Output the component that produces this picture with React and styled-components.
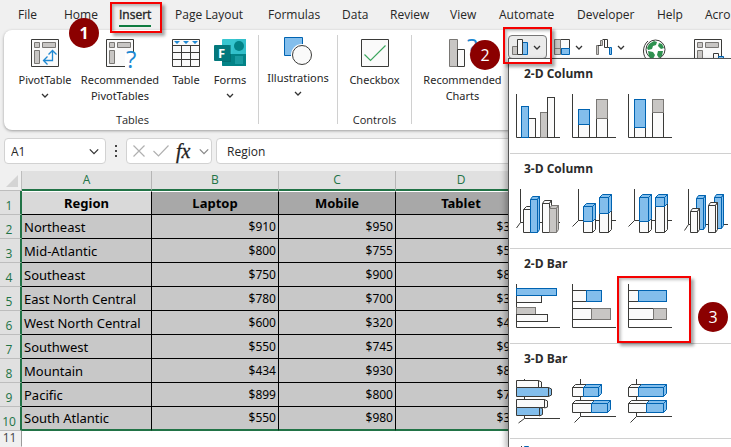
import React, { useState } from "react";
import styled, { createGlobalStyle, css } from "styled-components";

const BLUE = "#83beec";
const BLUE_LINE = "#0063b1";
const GRAY = "#c8c6c4";
const GRAY_LINE = "#797774";
const WHITE = "#fafafa";
const LINE = "#3a3a38";

const GlobalStyle = createGlobalStyle`
  * {
    box-sizing: border-box;
  }
  body {
    margin: 0;
    font-family: "Open Sans", "Noto Sans", sans-serif;
    font-size: 12px;
    color: #262626;
    background: #f0f0f0;
  }
  button, input {
    font: inherit;
    color: inherit;
  }
`;

const Window = styled.div`
  position: relative;
  display: flex;
  flex-direction: column;
  height: 100vh;
  overflow: hidden;
  background: #f0f0f0;
`;

const plainButton = css`
  padding: 0;
  border: 0;
  background: none;
  cursor: pointer;
`;

/* ---------- callouts ---------- */

const Highlight = styled.span`
  position: absolute;
  inset: ${(p) => p.$inset};
  border: 2px solid #f50000;
  box-shadow: 3px 3px 3px rgba(0, 0, 0, 0.35), inset 2px 2px 3px rgba(0, 0, 0, 0.25);
  pointer-events: none;
  z-index: 10;
`;

const Badge = styled.span`
  position: absolute;
  left: ${(p) => p.$left}px;
  top: ${(p) => p.$top}px;
  display: flex;
  align-items: center;
  justify-content: center;
  width: 30px;
  height: 30px;
  border-radius: 50%;
  background: #8b0000;
  color: #fff;
  font-size: 16px;
  font-weight: ${(p) => (p.$bold ? 700 : 400)};
  pointer-events: none;
  z-index: 10;
`;

/* ---------- tabs ---------- */

const TabBar = styled.nav`
  display: grid;
  grid-template-columns: 46px 55px 56px 93px 74px 48px 60px 49px 78px 80px 48px 60px;
  flex: none;
  height: 30px;
  padding-left: 18px;
`;

const TabItem = styled.div`
  position: relative;
  justify-self: start;
`;

const Tab = styled.button`
  ${plainButton}
  height: 27px;
  padding-top: 5px;
  line-height: 18px;
  white-space: nowrap;
  border-bottom: 2px solid ${(p) => (p.$active ? "#107c41" : "transparent")};
  -webkit-text-stroke: ${(p) => (p.$active ? "0.4px" : "0")};
`;

/* ---------- ribbon ---------- */

const Ribbon = styled.div`
  display: flex;
  flex: none;
  height: 100px;
  margin-left: 4px;
  padding: 5px 0 6px;
  border-radius: 8px 0 0 8px;
  background: #fff;
  box-shadow: 0 1px 3px rgba(0, 0, 0, 0.35);
`;

const Group = styled.section`
  display: flex;
  flex: none;
  flex-direction: column;
  align-items: center;
  justify-content: space-between;
  min-width: ${(p) => p.$min}px;
  padding-left: ${(p) => p.$pad || 0}px;
  border-right: 1px solid #d0d0d0;
`;

const Tools = styled.div`
  display: grid;
  grid-template-columns: 60px 84px 42px 40px;
  gap: 3px;
`;

const Tool = styled.button`
  ${plainButton}
  display: flex;
  flex-direction: column;
  align-items: center;
  width: 100%;
  padding-top: ${(p) => (p.$raised ? 2 : 4)}px;
  font-family: "Noto Sans", sans-serif;
  font-size: 11px;
  line-height: 16px;
  white-space: nowrap;

  svg {
    display: block;
    margin-bottom: 5px;
  }
  svg.chevron {
    margin: 5px 0 0;
  }
`;

const GroupName = styled.div`
  margin-bottom: -4px;
  line-height: 16px;
  font-size: 11px;
`;

const ChartGroup = styled.section`
  display: flex;
  flex: 1;
  align-items: flex-start;
  gap: 3px;
  min-width: 0;
  padding-left: 8px;
`;

const Recommend = styled.div`
  position: relative;
  flex: none;
  width: 85px;
`;

const Picker = styled.div`
  position: relative;
  flex: none;
`;

const PickerButton = styled.button`
  ${plainButton}
  display: flex;
  align-items: center;
  gap: 4px;
  height: 24px;
  padding: 0 5px 0 3px;
  border: 1px solid ${(p) => (p.$open ? "#767676" : "transparent")};
  border-radius: 4px;
  background: ${(p) => (p.$open ? "#ebebeb" : "none")};
`;

const BigIcon = styled.button`
  ${plainButton}
  flex: none;
  margin: 4px 0 0 ${(p) => p.$gap}px;
`;

/* ---------- formula bar ---------- */

const FormulaBar = styled.div`
  display: flex;
  flex: none;
  align-items: center;
  height: 41px;
  padding: 1px 0 0 4px;
`;

const Field = styled.div`
  display: flex;
  align-items: center;
  height: 26px;
  border: 1px solid #d2d2d2;
  border-radius: 4px;
  background: #fff;
`;

const NameField = styled(Field)`
  width: 102px;
  padding: 0 5px 0 6px;
`;

const Actions = styled(Field)`
  justify-content: space-between;
  width: 86px;
  padding: 0 1px 0 6px;
`;

const FormulaField = styled(Field)`
  flex: 1;
  margin-left: 4px;
  padding-left: 10px;
  border-radius: 4px 0 0 4px;
`;

const TextInput = styled.input`
  flex: 1;
  min-width: 0;
  width: 100%;
  padding: 0;
  border: 0;
  outline: 0;
  background: none;
`;

const IconButton = styled.button`
  ${plainButton}
  display: flex;
  align-items: center;
`;

const Fx = styled(IconButton)`
  font: italic 400 20px/20px "Liberation Serif", serif;
  color: #222;
  -webkit-text-stroke: 0.3px;
`;

const Dots = styled.span`
  display: flex;
  flex-direction: column;
  align-items: center;
  gap: 3px;
  width: 20px;

  i {
    width: 2px;
    height: 2px;
    background: #444;
  }
`;

/* ---------- sheet ---------- */

const SheetArea = styled.div`
  flex: 1;
  min-height: 0;
  overflow: hidden;
  background: #fff;
`;

const Sheet = styled.table`
  width: 100%;
  table-layout: fixed;
  border-spacing: 0;
  color: #000;

  th, td {
    padding: 0;
    overflow: hidden;
    white-space: nowrap;
    line-height: 16px;
  }
`;

const Corner = styled.th`
  width: 22px;
  background: #f0f0f0;
  border-right: 1px solid #bdbdbd;
  border-bottom: 1px solid #bdbdbd;

  svg {
    display: block;
    margin-left: 6px;
  }
`;

const ColHead = styled.th`
  width: ${(p) => p.$width};
  height: 20px;
  background: #e0e0e0;
  border-right: 1px solid #b5b5b5;
  border-bottom: 2px solid #217346;
  color: #217346;
  font-weight: 400;
`;

const RowHead = styled.th`
  height: ${(p) => (p.$selected ? 24 : 16)}px;
  vertical-align: ${(p) => (p.$selected ? "bottom" : "top")};
  background: ${(p) => (p.$selected ? "#e0e0e0" : "#f0f0f0")};
  border-right: ${(p) => (p.$selected ? "2px solid #217346" : "1px solid #9b9b9b")};
  border-bottom: 1px solid ${(p) => (p.$selected ? "#bdbdbd" : "#f0f0f0")};
  color: ${(p) => (p.$selected ? "#217346" : "#444")};
  font-weight: 400;
  && {
    padding-right: 2px;
    line-height: ${(p) => (p.$selected ? 16 : 14)}px;
  }
`;

const Title = styled.th`
  background: ${(p) => (p.$first ? "#d9d9d9" : "#a8a8a8")};
  border-right: 1px solid #000;
  border-bottom: 1px solid #000;
  border-top: 1px solid #fff;
  font-family: "Noto Sans", sans-serif;
  font-size: 13px;
  font-weight: 700;
`;

const Cell = styled.td`
  background: #c8c8c8;
  border-right: 1px solid #000;
  border-bottom: ${(p) => (p.$end ? "2px solid #217346" : "1px solid #000")};
  font-family: "Noto Sans", sans-serif;
  font-size: ${(p) => (p.$money ? 12 : 13)}px;
  text-align: ${(p) => (p.$money ? "right" : "left")};
  && {
    padding: ${(p) => (p.$money ? "0 2px 0 0" : "0 0 0 2px")};
  }
`;

/* ---------- chart menu ---------- */

const Menu = styled.div`
  position: absolute;
  left: 508px;
  right: 0;
  top: 58px;
  bottom: 0;
  overflow: hidden;
  border-top: 1px solid #555;
  border-left: 1px solid #555;
  background: #fff;
  box-shadow: -3px 2px 5px rgba(0, 0, 0, 0.25);
  z-index: 5;
`;

const MenuSection = styled.section`
  height: 95px;
  margin-left: 1px;
  padding: 6px 0 0 6px;
  border-bottom: 1px solid #d0d0d0;
`;

const MenuTitle = styled.h2`
  margin: 0 0 11px;
  padding-left: 8px;
  font-size: 12px;
  font-weight: 700;
  line-height: 18px;
  color: #2b2b2b;
`;

const Choices = styled.div`
  display: flex;
  gap: 12px;
`;

const Choice = styled.button`
  ${plainButton}
  position: relative;
  flex: none;
  width: 44px;
  height: 44px;

  svg {
    display: block;
  }
`;

const MoreRow = styled.div`
  padding: 7px 0 0 12px;
`;

/* ---------- icons ---------- */

const tones = {
  blue: [BLUE, BLUE_LINE],
  gray: [GRAY, GRAY_LINE],
  white: [WHITE, LINE],
};

const Chevron = ({ size = 8, color = "#333" }) => (
  <svg className="chevron" width={size} height={size / 2 + 1} viewBox="0 0 8 5">
    <path d="M1 1l3 3 3-3" fill="none" stroke={color} strokeWidth={size > 8 ? 0.9 : 1.3} />
  </svg>
);

// bars: [tone, x1, y1, x2, y2]
const Flat = ({ bars }) => (
  <svg width="44" height="44">
    <path d="M.5 0V43.5H44" fill="none" stroke={LINE} />
    {bars.map(([tone, x1, y1, x2, y2]) => (
      <rect
        key={`${x1}-${y1}`}
        x={x1 + 0.5}
        y={y1 + 0.5}
        width={x2 - x1}
        height={y2 - y1}
        fill={tones[tone][0]}
        stroke={tones[tone][1]}
      />
    ))}
  </svg>
);

const Block = ({ tone, x1, y1, x2, y2, side = true, top = true, dx = 3, dy = 3 }) => {
  const [fill, stroke] = tones[tone];
  return (
    <g fill={fill} stroke={stroke} strokeLinejoin="round">
      {top && <path d={`M${x1} ${y1}l${dx}-${dy}H${x2 + dx}L${x2} ${y1}z`} />}
      {side && <path d={`M${x2} ${y1}l${dx}-${dy}V${y2 - dy}L${x2} ${y2}z`} />}
      <path d={`M${x1} ${y1}H${x2}V${y2}H${x1}z`} />
    </g>
  );
};

// blocks: [tone, x1, y1, x2, y2, options]
const Solid = ({ axis, blocks, children }) => (
  <svg width="44" height="45" viewBox="0 0 44 45">
    <path d={axis} fill="none" stroke={LINE} />
    {blocks.map(([tone, x1, y1, x2, y2, options], i) => (
      <Block
        key={i}
        tone={tone}
        x1={x1 + 0.5}
        y1={y1 + 0.5}
        x2={x2 + 0.5}
        y2={y2 + 0.5}
        {...options}
      />
    ))}
    {children}
  </svg>
);

const ClusteredBars = () => (
  <svg width="44" height="45" viewBox="0 0 44 45">
    <path d="M8.500 0V39.500H44M8.500 39.500L2.500 44" fill="none" stroke={LINE} />
    <g fill={WHITE} stroke={LINE}>
      <path d="M22.500 1.500l3 1.500V8.500h-3z" />
      <path d="M.5 1.500h22v7H.5z" />
      <path d="M28.500 20.500l3 1.500v6l-3 1z" />
      <path d="M.5 20.500h28v8H.5z" />
    </g>
    <g fill={BLUE} stroke={LINE}>
      <path d="M32.500 8.500l3 1.500v6l-3 1.500z" />
      <path d="M.5 8.500h32v9H.5z" />
      <path d="M23.500 28.500l3 1v6l-3 1.500z" />
      <path d="M.5 28.500h23v8H.5z" />
    </g>
  </svg>
);

const Question = ({ x, y }) => (
  <text x={x} y={y} fontSize="24" fontWeight="400" fill="#1e88d2" fontFamily="Open Sans, sans-serif">
    ?
  </text>
);

const PivotFrame = () => (
  <g>
    <path d="M.5 .5h27v27H.5z" fill={WHITE} stroke={LINE} />
    <path d="M3.500 3.500h5v5h-5zM11.500 3.500h13v5h-13zM3.500 11.500h5v13h-5z" fill={GRAY} stroke={GRAY_LINE} />
  </g>
);

const PivotIcon = () => (
  <svg width="28" height="28">
    <PivotFrame />
    <path d="M13 21.500h8.500V12M17.500 15.500l4-4 4 4M16.500 17.500l-4 4 4 4" fill="none" stroke="#1e88d2" strokeWidth="1.300" />
  </svg>
);

const RecommendedPivotIcon = () => (
  <svg width="28" height="28" overflow="visible">
    <PivotFrame />
    <path d="M19 13h10v16H19z" fill="#fff" />
    <Question x="20" y="29" />
  </svg>
);

const TableIcon = () => (
  <svg width="28" height="28">
    <path d="M.5 .5h27v27H.5z" fill={WHITE} stroke={LINE} />
    <path d="M0 6.500h28M0 13.500h28M0 20.500h28M9.500 6v22M18.500 6v22" stroke={LINE} />
    <path d="M2 2h6L5 5zM11 2h6l-3 3zM20 2h6l-3 3z" fill="#1e88d2" />
  </svg>
);

const FormsIcon = () => (
  <svg width="32" height="28">
    <path d="M8 1q0-1 1-1h23v27H9q-1 0-1-1z" fill="#37c6d0" />
    <path d="M8 15h24v12H9q-1 0-1-1z" fill="#038387" />
    <path d="M22 0h10v15H18z" fill="#32bfca" />
    <circle cx="25" cy="7" r="5" fill="#038387" />
    <path d="M21 17h8v8h-8z" fill="#1a9ba1" />
    <path d="M8 6h9v17H8z" fill="#025b5e" opacity=".5" />
    <rect y="6" width="16" height="16" rx="1" fill="#03787c" />
    <text x="4" y="19" fontSize="13" fontWeight="700" fill="#fff" fontFamily="Open Sans, sans-serif">
      F
    </text>
  </svg>
);

const ShapesIcon = () => (
  <svg width="29" height="28">
    <path d="M.5 .5h18v18H.5z" fill={BLUE} stroke={BLUE_LINE} />
    <circle cx="18" cy="18" r="11" fill="#fff" />
    <circle cx="18" cy="18" r="9.500" fill={WHITE} stroke={LINE} />
  </svg>
);

const CheckIcon = () => (
  <svg width="28" height="28">
    <path d="M.5 .5h27v27H.5z" fill={WHITE} stroke={LINE} />
    <path d="M3.500 15.500l6 6L24.500 6.500" fill="none" stroke="#3ba55d" strokeWidth="1.200" />
  </svg>
);

const RecommendedChartIcon = () => (
  <svg width="28" height="28" overflow="visible">
    <path d="M.5 .5h8v27h-8z" fill={GRAY} stroke={GRAY_LINE} />
    <path d="M8.500 10.500h7v17h-7z" fill={WHITE} stroke={LINE} />
    <Question x="18" y="17" />
  </svg>
);

const ColumnIcon = () => (
  <svg width="17" height="16">
    <path d="M.5 7.500h5v8h-5z" fill={GRAY} stroke={GRAY_LINE} />
    <path d="M10.500 3.500h5v12h-5z" fill={BLUE} stroke={BLUE_LINE} />
    <path d="M5.500 .5h5v15h-5z" fill={WHITE} stroke={LINE} />
  </svg>
);

const TreemapIcon = () => (
  <svg width="17" height="16">
    <path d="M6.500 .5h9v9h-9z" fill={WHITE} stroke={LINE} />
    <path d="M.5 .5h6v15h-6zM.5 9.500h6" fill={GRAY} stroke={GRAY_LINE} />
    <path d="M7.500 9.500h8v6h-8z" fill={BLUE} stroke={BLUE_LINE} />
  </svg>
);

const WaterfallIcon = () => (
  <svg width="17" height="16">
    <path d="M.5 6.500h2v9h-2zM4.500 1.500h2v5h-2z" fill={GRAY} stroke={GRAY_LINE} />
    <path d="M2 6.500h3M6.500 .5h5M8.500 .5v8h3v-8M11.500 8.500h2" fill="none" stroke={LINE} />
    <path d="M13.500 8.500h2v7h-2z" fill={BLUE} stroke={BLUE_LINE} />
  </svg>
);

const GlobeIcon = () => (
  <svg width="24" height="28">
    <path d="M5 2C-1 7-1 17 5 22" fill="none" stroke={LINE} />
    <circle cx="12.500" cy="10.500" r="9.500" fill="#fff" stroke={LINE} />
    <path
      d="M4 9l2-4 5-3 3 1-1 3-3 1-1 3-4 1zM16 4l3 1 2 4-3 1-3-3zM5 12l5 1 2 3-2 4-4-2zM15 12h5l-1 5-3 2-2-3z"
      fill="#2f9150"
    />
  </svg>
);

const PivotChartIcon = () => (
  <svg width="30" height="28">
    <PivotFrame />
    <path d="M19.500 14.500h5v13h-5z" fill={WHITE} stroke={LINE} />
    <path d="M24.500 17.500h5v10h-5z" fill={BLUE} stroke={BLUE_LINE} />
  </svg>
);

/* ---------- data ---------- */

const tabs = [
  "File", "Home", "Insert", "Page Layout", "Formulas", "Data",
  "Review", "View", "Automate", "Developer", "Help", "Acro",
];

const titles = ["Region", "Laptop", "Mobile", "Tablet"];

const columns = [
  ["A", "130px"],
  ["B", "127px"],
  ["C", "117px"],
  ["D", "131px"],
  ["E", "auto"],
];

const rows = [
  ["Northeast", "$910", "$950", "$350"],
  ["Mid-Atlantic", "$800", "$755", "$500"],
  ["Southeast", "$750", "$900", "$800"],
  ["East North Central", "$780", "$700", "$300"],
  ["West North Central", "$600", "$320", "$450"],
  ["Southwest", "$550", "$745", "$900"],
  ["Mountain", "$434", "$930", "$800"],
  ["Pacific", "$899", "$800", "$700"],
  ["South Atlantic", "$550", "$980", "$300"],
];

const inner = { side: false };
const noTop = { top: false };
const slim = { dx: 2 };
const AXIS_A = "M4.500 0V33.500H44M4.500 33.500L.5 39";
const AXIS_B = "M6.500 0V31.500H44M6.500 31.500L.5 37.500";
const AXIS_C = "M4.500 0V35.500H44M4.500 35.500L.5 41.500";
const AXIS_D = "M8.500 0V37.500H44M8.500 37.500L2.500 43.500";

const menu = [
  {
    title: "2-D Column",
    icons: [
      <Flat bars={[["white", 12, 24, 19, 43], ["blue", 5, 12, 12, 43], ["gray", 24, 18, 31, 43], ["white", 31, 3, 38, 43]]} />,
      <Flat bars={[["white", 6, 30, 17, 43], ["blue", 6, 15, 17, 30], ["white", 24, 24, 35, 43], ["gray", 24, 5, 35, 24]]} />,
      <Flat bars={[["white", 6, 33, 17, 43], ["blue", 6, 5, 17, 33], ["white", 24, 18, 35, 43], ["gray", 24, 5, 35, 18]]} />,
    ],
  },
  {
    title: "3-D Column",
    icons: [
      <Solid axis={AXIS_A} blocks={[["white", 7, 20, 14, 43], ["blue", 14, 10, 21, 43, slim], ["white", 26, 14, 33, 43, slim], ["gray", 33, 19, 40, 43, slim]]} />,
      <Solid axis={AXIS_B} blocks={[["white", 11, 32, 20, 43, noTop], ["blue", 11, 17, 20, 32], ["white", 27, 24, 36, 43, noTop], ["blue", 27, 8, 36, 24]]} />,
      <Solid axis={AXIS_B} blocks={[["white", 11, 32, 20, 43, noTop], ["blue", 11, 8, 20, 32], ["white", 27, 17, 36, 43, noTop], ["blue", 27, 8, 36, 17]]} />,
      <Solid axis={AXIS_C} blocks={[["blue", 12, 9, 19, 40, slim], ["white", 6, 22, 13, 43, slim], ["blue", 30, 8, 37, 39, slim], ["white", 24, 16, 31, 43, slim]]} />,
    ],
  },
  {
    title: "2-D Bar",
    icons: [
      <Flat bars={[["white", 0, 11, 25, 18], ["blue", 0, 4, 40, 11], ["gray", 0, 23, 19, 30], ["white", 0, 30, 31, 37]]} />,
      <Flat bars={[["white", 0, 6, 14, 17], ["blue", 14, 6, 29, 17], ["white", 0, 24, 19, 35], ["gray", 19, 24, 38, 35]]} />,
      <Flat bars={[["white", 0, 6, 10, 17], ["blue", 10, 6, 38, 17], ["white", 0, 24, 25, 35], ["gray", 25, 24, 38, 35]]} />,
    ],
    marked: 2,
  },
  {
    title: "3-D Bar",
    icons: [
      <ClusteredBars />,
      <Solid axis={AXIS_D} blocks={[["white", 0, 8, 11, 17, inner], ["blue", 11, 8, 26, 17], ["white", 0, 24, 19, 33, inner], ["blue", 19, 24, 35, 33]]} />,
      <Solid axis={AXIS_D} blocks={[["white", 0, 8, 10, 17, inner], ["blue", 10, 8, 35, 17], ["white", 0, 24, 18, 33, inner], ["blue", 18, 24, 35, 33]]} />,
    ],
  },
];

const ChartMenu = () => (
  <Menu>
    {menu.map((section) => (
      <MenuSection key={section.title}>
        <MenuTitle>{section.title}</MenuTitle>
        <Choices>
          {section.icons.map((icon, i) => (
            <Choice key={i} aria-label={`${section.title} ${i + 1}`}>
              {icon}
              {section.marked === i && (
                <>
                  <Highlight $inset="-8px -19px -15px -11px" />
                  <Badge $left={70} $top={18}>3</Badge>
                </>
              )}
            </Choice>
          ))}
        </Choices>
      </MenuSection>
    ))}
    <MoreRow>
      <svg width="18" height="16">
        <path d="M.5 0V15.500H16" fill="none" stroke={LINE} />
        <path d="M3.500 .5h4v15h-4z" fill={BLUE} stroke={BLUE_LINE} />
      </svg>
    </MoreRow>
  </Menu>
);

const App = () => {
  const [activeTab, setActiveTab] = useState("Insert");
  const [cellName, setCellName] = useState("A1");
  const [formula, setFormula] = useState("Region");
  const [menuOpen, setMenuOpen] = useState(true);

  return (
    <Window>
      <GlobalStyle />
      <TabBar>
        {tabs.map((tab) => (
          <TabItem key={tab}>
            <Tab $active={tab === activeTab} onClick={() => setActiveTab(tab)}>
              {tab}
            </Tab>
            {tab === "Insert" && (
              <>
                <Highlight $inset="2px -11px -3px -9px" />
                <Badge $left={-50} $top={18} $bold>1</Badge>
              </>
            )}
          </TabItem>
        ))}
      </TabBar>

      <Ribbon>
        <Group $min={255} $pad={3}>
          <Tools>
            <Tool>
              <PivotIcon />
              PivotTable
              <Chevron />
            </Tool>
            <Tool>
              <RecommendedPivotIcon />
              Recommended
              <br />
              PivotTables
            </Tool>
            <Tool>
              <TableIcon />
              Table
            </Tool>
            <Tool>
              <FormsIcon />
              Forms
              <Chevron />
            </Tool>
          </Tools>
          <GroupName>Tables</GroupName>
        </Group>
        <Group $min={79}>
          <Tool $raised>
            <ShapesIcon />
            Illustrations
            <Chevron />
          </Tool>
        </Group>
        <Group $min={74}>
          <Tool>
            <CheckIcon />
            Checkbox
          </Tool>
          <GroupName>Controls</GroupName>
        </Group>
        <ChartGroup>
          <Recommend>
            <Tool>
              <RecommendedChartIcon />
              Recommended
              <br />
              Charts
            </Tool>
            <Badge $left={50} $top={5}>2</Badge>
          </Recommend>
          <Picker>
            <PickerButton $open={menuOpen} aria-label="Column or bar chart" onClick={() => setMenuOpen(!menuOpen)}>
              <ColumnIcon />
              <Chevron />
            </PickerButton>
            <Highlight $inset="-8px -5px -5px -5px" />
          </Picker>
          <Picker>
            <PickerButton aria-label="Hierarchy chart">
              <TreemapIcon />
              <Chevron />
            </PickerButton>
          </Picker>
          <Picker>
            <PickerButton aria-label="Waterfall chart">
              <WaterfallIcon />
              <Chevron />
            </PickerButton>
          </Picker>
          <BigIcon $gap={9} aria-label="Maps">
            <GlobeIcon />
          </BigIcon>
          <BigIcon $gap={24} aria-label="PivotChart">
            <PivotChartIcon />
          </BigIcon>
        </ChartGroup>
      </Ribbon>

      <FormulaBar>
        <NameField>
          <TextInput aria-label="Name box" value={cellName} onChange={(e) => setCellName(e.target.value)} />
          <IconButton aria-label="Names">
            <Chevron size={12} />
          </IconButton>
        </NameField>
        <Dots>
          <i />
          <i />
          <i />
        </Dots>
        <Actions>
          <IconButton aria-label="Cancel">
            <svg width="12" height="12">
              <path d="M.5 .5l11 11M11.500 .5l-11 11" stroke="#b0b0b0" strokeWidth="1.200" />
            </svg>
          </IconButton>
          <IconButton aria-label="Enter">
            <svg width="16" height="12">
              <path d="M.5 6l5 5L15.500 .5" fill="none" stroke="#b0b0b0" strokeWidth="1.200" />
            </svg>
          </IconButton>
          <Fx aria-label="Insert function">fx</Fx>
          <IconButton aria-label="Functions">
            <Chevron size={12} color="#888" />
          </IconButton>
        </Actions>
        <FormulaField>
          <TextInput aria-label="Formula" value={formula} onChange={(e) => setFormula(e.target.value)} />
        </FormulaField>
      </FormulaBar>

      <SheetArea>
        <Sheet>
          <thead>
            <tr>
              <Corner>
                <svg width="12" height="12">
                  <path d="M12 0v12H0z" fill="#d4d4d4" />
                </svg>
              </Corner>
              {columns.map(([name, width]) => (
                <ColHead key={name} $width={width}>{name}</ColHead>
              ))}
            </tr>
          </thead>
          <tbody>
            <tr>
              <RowHead $selected>1</RowHead>
              {titles.map((title, i) => (
                <Title key={title} $first={i === 0}>{title}</Title>
              ))}
            </tr>
            {rows.map((row, r) => (
              <tr key={row[0]}>
                <RowHead $selected>{r + 2}</RowHead>
                {row.map((value, c) => (
                  <Cell key={c} $money={c > 0} $end={r === rows.length - 1}>{value}</Cell>
                ))}
              </tr>
            ))}
            <tr>
              <RowHead>11</RowHead>
            </tr>
          </tbody>
        </Sheet>
      </SheetArea>

      {menuOpen && <ChartMenu />}
    </Window>
  );
};

export default App;
